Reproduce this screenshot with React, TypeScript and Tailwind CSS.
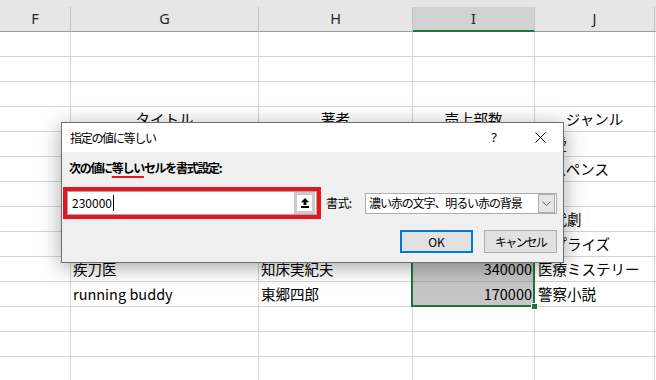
import React from 'react'

type Row = { g?: string; h?: string; i?: string; j?: string; head?: boolean }

const rows: Row[] = [
  {},
  {},
  {},
  { g: 'タイトル', h: '著者', i: '売上部数', j: 'ジャンル', head: true },
  { g: '恋する季節', h: '山田花子', i: '230000', j: '恋愛' },
  { g: '影の追跡者', h: '佐藤健一', i: '180000', j: 'サスペンス' },
  { g: '宇宙の果て', h: '鈴木一郎', i: '120000', j: 'SF' },
  { g: '夢の舞台', h: '高橋美咲', i: '230000', j: '時代劇' },
  { g: '秘密の贈り物', h: '田中誠', i: '150000', j: 'サプライズ' },
  { g: '疾刀医', h: '知床実紀夫', i: '340000', j: '医療ミステリー' },
  { g: 'running buddy', h: '東郷四郎', i: '170000', j: '警察小説' },
  {},
  {},
  {},
]

function SheetRow({ row, index }: { row: Row; index: number }) {
  const selected = index >= 4 && index <= 10
  const align = row.head ? 'justify-center' : 'justify-start pl-[2px]'
  return (
    <div className="flex h-[25px]">
      <div className="w-[71px] shrink-0 border-r border-b border-[#d4d4d4]" />
      <div className={`w-[188px] shrink-0 border-r border-b border-[#d4d4d4] flex items-center whitespace-nowrap overflow-hidden ${align}`}>
        {row.g}
      </div>
      <div className={`w-[154px] shrink-0 border-r border-b border-[#d4d4d4] flex items-center whitespace-nowrap overflow-hidden ${align}`}>
        {row.h}
      </div>
      <div
        className={`w-[122px] shrink-0 border-r border-b flex items-center whitespace-nowrap overflow-hidden ${
          row.head ? 'justify-center' : 'justify-end pr-[2px]'
        } ${selected ? 'bg-[#c6c6c6] border-[#ababab]' : 'border-[#d4d4d4]'}`}
      >
        {row.i}
      </div>
      <div className={`w-[120px] shrink-0 border-r border-b border-[#d4d4d4] flex items-center whitespace-nowrap ${row.head ? 'justify-center' : 'justify-start pl-[3px]'}`}>
        {row.j}
      </div>
      <div className="flex-1 border-b border-[#d4d4d4]" />
    </div>
  )
}

export default function App() {
  return (
    <div className="relative w-[656px] h-[380px] overflow-hidden bg-white text-black font-['Noto_Sans_CJK_JP','Noto_Sans',sans-serif]">
      {/* --- column headers --- */}
      <div className="h-[7px] bg-[#e6e6e6]" />
      <div className="flex h-[25px] bg-[#e6e6e6] text-[14.5px] text-[#262626] font-['Noto_Sans',sans-serif]">
        <div className="w-[71px] shrink-0 border-r border-r-[#c4c4c4] border-b border-b-[#9c9c9c] flex items-center justify-center">F</div>
        <div className="w-[188px] shrink-0 border-r border-r-[#c4c4c4] border-b border-b-[#9c9c9c] flex items-center justify-center">G</div>
        <div className="w-[154px] shrink-0 border-r border-r-[#c4c4c4] border-b border-b-[#9c9c9c] flex items-center justify-center">H</div>
        <div className="w-[122px] shrink-0 bg-[#d2d2d2] border-r border-r-[#c4c4c4] border-b-2 border-b-[#217346] flex items-center justify-center">I</div>
        <div className="w-[120px] shrink-0 border-r border-r-[#c4c4c4] border-b border-b-[#9c9c9c] flex items-center justify-center">J</div>
        <div className="flex-1 border-b border-b-[#9c9c9c]" />
      </div>

      {/* --- cells --- */}
      <div className="text-[14.5px]">
        {rows.map((row, i) => (
          <SheetRow key={i} row={row} index={i} />
        ))}
      </div>

      {/* selection frame */}
      <div className="absolute left-[411px] top-[131px] w-[124px] h-[176px] border-2 border-[#217346]">
        <div className="absolute right-[-5px] bottom-[-5px] w-[7px] h-[7px] bg-[#217346] border border-white" />
      </div>

      {/* --- dialog --- */}
      <div className="absolute left-[61px] top-[122px] w-[503px] h-[141px] border border-[#6f6f6f] bg-[#f0f0f0] shadow-[0_4px_20px_rgba(0,0,0,0.35)] flex flex-col text-[12px]">
        <div className="h-[29px] bg-white flex items-center pl-[8px]">
          <span className="tracking-[-1.3px]">指定の値に等しい</span>
          <span className="ml-auto w-[12px] text-center text-[13px] font-['Noto_Sans',sans-serif]">?</span>
          <svg className="ml-[35px] mr-[17px]" width="11" height="11" viewBox="0 0 11 11">
            <path d="M0.5 0.5 L10.5 10.5 M10.5 0.5 L0.5 10.5" stroke="#000" strokeWidth="1" />
          </svg>
        </div>

        <div className="flex-1 flex flex-col">
          <div className="mt-[8px] h-[16px] pl-[7px] flex items-center font-bold tracking-[-1.3px] leading-[16px]">
            次の値に
            <span className="underline decoration-[#e8141e] decoration-2 underline-offset-[3px]">等しい</span>
            セルを書式設定:
          </div>

          <div className="mt-[11px] h-[32px] flex items-center">
            <div className="ml-[1px] w-[258px] h-[32px] border-4 border-[#e8141e]">
              <div className="h-full flex border border-[#a9a9a9] bg-white">
                <div className="flex-1 flex items-center pl-[4px]">
                  230000
                  <span className="inline-block w-[1px] h-[16px] bg-black ml-[1px]" />
                </div>
                <div className="w-[21px] mr-[1px] bg-[#cbcbcb] flex items-center justify-center">
                  <div className="w-[15px] h-[16px] bg-white flex items-center justify-center">
                    <svg width="8" height="10" viewBox="0 0 8 10">
                      <path d="M4 0 L8 4.2 L5.4 4.2 L5.4 7 L2.6 7 L2.6 4.2 L0 4.2 Z" fill="#000" />
                      <rect x="0" y="8" width="8" height="2" fill="#000" />
                    </svg>
                  </div>
                </div>
              </div>
            </div>
            <span className="ml-[5px] w-[30px] whitespace-nowrap tracking-[-0.6px]">書式:</span>
            <div className="ml-[9px] w-[192px] h-[21px] border border-[#adadad] bg-white flex items-center">
              <span className="pl-[3px] tracking-[-1.1px] whitespace-nowrap">濃い赤の文字、明るい赤の背景</span>
              <div className="ml-auto mr-[1px] w-[17px] h-[19px] bg-[#e5e5e5] border border-[#adadad] flex items-center justify-center">
                <svg width="9" height="5" viewBox="0 0 9 5">
                  <path d="M0.5 0.5 L4.5 4.5 L8.5 0.5" fill="none" stroke="#606060" strokeWidth="1" />
                </svg>
              </div>
            </div>
          </div>

          <div className="mt-[11px] flex justify-end gap-[11px] pr-[6px]">
            <div className="w-[73px] h-[23px] border-2 border-[#0078d7] bg-[#e1e1e1] flex items-center justify-center">OK</div>
            <div className="w-[73px] h-[23px] border border-[#adadad] bg-[#e1e1e1] flex items-center justify-center tracking-[-1.8px]">
              キャンセル
            </div>
          </div>
        </div>
      </div>
    </div>
  )
}
